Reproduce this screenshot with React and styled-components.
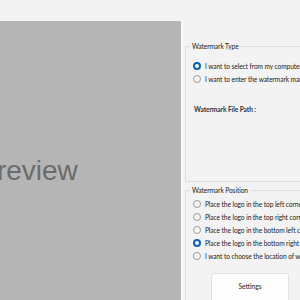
import React from "react";
import styled, { createGlobalStyle } from "styled-components";

const GlobalStyle = createGlobalStyle`
  html, body {
    margin: 0;
    padding: 0;
    background: #f3f3f3;
    overflow: hidden;
  }
`;

const Window = styled.div`
  width: 300px;
  height: 300px;
  overflow: hidden;
  display: flex;
  flex-direction: column;
  font-family: Lato, "Noto Sans", sans-serif;
  color: #1b1b1b;
`;

const TopBar = styled.div`
  height: 21px;
  flex-shrink: 0;
`;

const Body = styled.div`
  flex: 1;
  display: flex;
  min-height: 0;
`;

const PreviewPane = styled.div`
  width: 310px;
  margin-left: -129px;
  flex-shrink: 0;
  background: #b5b5b5;
  display: flex;
  justify-content: center;
  padding: 136px 0 0 4px;
  box-sizing: border-box;
`;

const PreviewText = styled.div`
  font-family: "Liberation Sans", Arial, sans-serif;
  font-size: 28px;
  line-height: 1;
  color: #6b6b6b;
`;

const Splitter = styled.div`
  width: 2px;
  flex-shrink: 0;
  background: #fafafa;
`;

const SidePane = styled.div`
  width: 220px;
  flex-shrink: 0;
  padding: 21px 0 0 2px;
  display: flex;
  flex-direction: column;
  gap: 4px;
`;

const Group = styled.fieldset`
  margin: 0;
  padding: ${(p) => p.$top}px 0 0 7px;
  border: 1px solid #dedede;
  border-radius: 1px;
  height: ${(p) => p.$height}px;
  flex-shrink: 0;
  box-sizing: border-box;
  display: flex;
  flex-direction: column;
  gap: 4px;
`;

const Legend = styled.legend`
  font-size: 6.6px;
  letter-spacing: -0.08px;
  padding: 0 2px;
  margin-left: -3px;
  color: #1b1b1b;
`;

const Option = styled.label`
  display: flex;
  align-items: center;
  gap: 4px;
  font-size: 6.6px;
  letter-spacing: -0.08px;
  height: 9px;
  white-space: nowrap;
`;

const Radio = styled.span`
  width: 8px;
  height: 8px;
  border-radius: 50%;
  box-sizing: border-box;
  flex-shrink: 0;
  border: ${(p) => (p.$checked ? "2.5px solid #0d5fb3" : "1px solid #9a9a9a")};
  background: ${(p) => (p.$checked ? "#ffffff" : "#f7f7f7")};
`;

const FieldLabel = styled.div`
  font-size: 6.6px;
  letter-spacing: -0.08px;
  font-weight: 700;
  color: #333333;
  margin: 18px 0 0 1px;
`;

const Button = styled.button`
  align-self: flex-start;
  margin: 9px 0 0 18px;
  width: 78px;
  height: 32px;
  flex-shrink: 0;
  background: #fdfdfd;
  border: 1px solid #e2e2e2;
  border-radius: 3px;
  font-family: inherit;
  font-size: 6.6px;
  color: #1b1b1b;
  padding: 0 0 6px;
`;

const typeOptions = [
  "I want to select from my computer",
  "I want to enter the watermark manually",
];

const positionOptions = [
  "Place the logo in the top left corner",
  "Place the logo in the top right corner",
  "Place the logo in the bottom left corner",
  "Place the logo in the bottom right corner",
  "I want to choose the location of watermark",
];

export default function App() {
  return (
    <Window>
      <GlobalStyle />
      <TopBar />
      <Body>
        <PreviewPane>
          <PreviewText>Preview</PreviewText>
        </PreviewPane>
        <Splitter />
        <SidePane>
          <Group $height={140} $top={11}>
            <Legend>Watermark Type</Legend>
            {typeOptions.map((t, i) => (
              <Option key={t}>
                <Radio $checked={i === 0} />
                {t}
              </Option>
            ))}
            <FieldLabel>Watermark File Path :</FieldLabel>
          </Group>
          <Group $height={130} $top={5}>
            <Legend>Watermark Position</Legend>
            {positionOptions.map((t, i) => (
              <Option key={t}>
                <Radio $checked={i === 3} />
                {t}
              </Option>
            ))}
            <Button>Settings</Button>
          </Group>
        </SidePane>
      </Body>
    </Window>
  );
}
